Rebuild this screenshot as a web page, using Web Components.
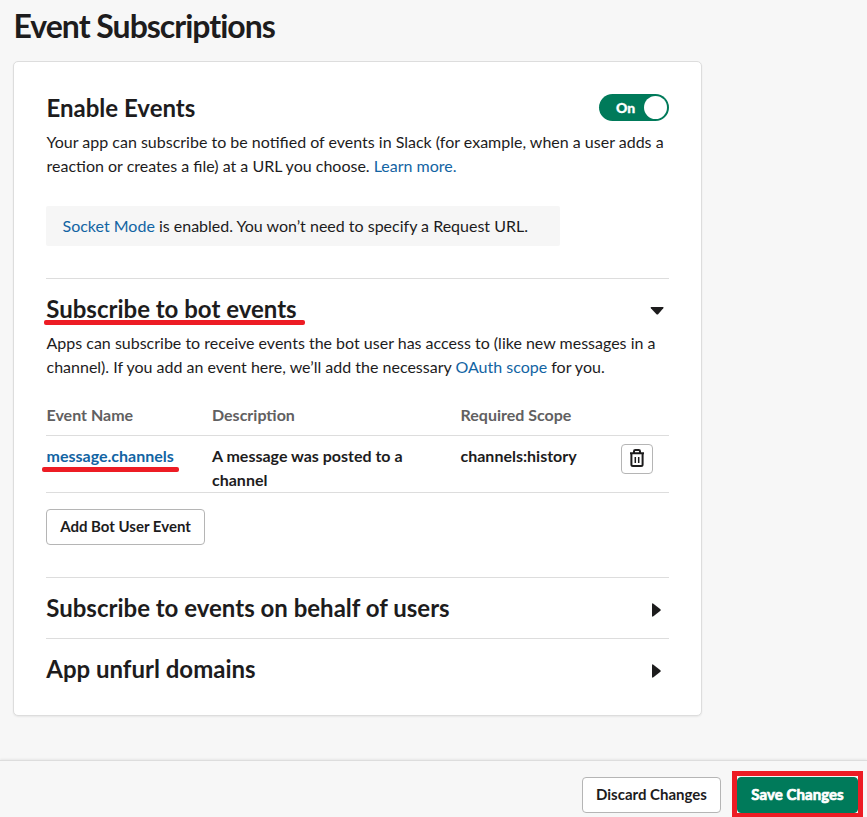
<!DOCTYPE html>
<html lang="en"><head><meta charset="utf-8"><title>Event Subscriptions</title>
<style>html,body{margin:0;height:100%;overflow:hidden;background:#f7f7f7}</style></head><body>
<event-page></event-page>
<script>
const define=(name,css,html)=>customElements.define(name,class extends HTMLElement{
  constructor(){super();this.attachShadow({mode:'open'}).innerHTML=`<style>*{box-sizing:border-box}${css}</style>${html}`;}
});
define('toggle-switch',`:host{display:flex;box-sizing:border-box;width:70px;height:27px;border-radius:14px;background:#007a5a;color:#fff;align-items:center;justify-content:space-between;padding:0 2px 0 17px;font:900 14px/25px Lato,sans-serif;-webkit-text-stroke:.3px #fff}i{width:23px;height:23px;border-radius:50%;background:#fff}`,`<slot></slot><i></i>`);
define('text-link',`:host{color:#1264a3}`,`<slot></slot>`);
define('note-box',`:host{display:block;box-sizing:border-box;width:514px;height:40px;background:#f6f6f6;border-radius:2px;padding:8px 16.5px;white-space:nowrap}`,`<slot></slot>`);
define('slack-button',`:host{display:flex;box-sizing:border-box;height:36px;border:1px solid #b5b5b5;border-radius:4px;background:#fff;align-items:center;justify-content:center;font:700 15px/24px Lato,sans-serif;padding-bottom:2px;white-space:nowrap}:host([icon]){width:32px;height:30px;padding:0 0 2px}:host([primary]){background:#007a5a;border-color:#007a5a;color:#fff;letter-spacing:.06px;-webkit-text-stroke:.7px #fff}`,`<slot></slot>`);
define('section-head',`:host{display:flex;align-items:center;justify-content:space-between;height:60px;padding-right:6px}:host([open]){padding-right:5px}h2{margin:0 0 0 .25px;font:700 24px/32px Lato,sans-serif;white-space:nowrap}svg{display:block;margin-top:4px}.down{display:none}:host([open]) .down{display:block}:host([open]) .right{display:none}`,`<h2><slot></slot></h2><svg class="right" width="12" height="16"><path d="M1 2.2Q1 .8 2.4 1.7L9.4 7.2Q10.2 8 9.4 8.8L2.4 14.3Q1 15.2 1 13.8Z" fill="#1d1c1d"/></svg><svg class="down" width="14" height="12"><path d="M1.3 2Q0 2 .9 3.3L6.5 9.2Q7.3 10 8.1 9.2L13.3 3.3Q14.2 2 12.9 2Z" fill="#1d1c1d"/></svg>`);
define('event-table',`:host{display:block}.row{display:grid;grid-template-columns:166px 248.5px 160.5px 1fr;border-bottom:1px solid #ddd;font-weight:700}.head{height:33px;color:#616061;line-height:24px}.body{height:57px;padding-top:8px}.row>:first-child{margin-left:.5px}text-link{justify-self:start}`,`<div class="row head"><span>Event Name</span><span>Description</span><span>Required Scope</span></div><div class="row body"><text-link>message.channels</text-link><span>A message was posted to a<br>channel</span><span>channels:history</span><slack-button icon><svg width="16" height="18" viewBox="0 0 16 18" fill="none" stroke="#1d1c1d" stroke-width="2" stroke-linejoin="round"><path d="M1 4.2H15M5 4V2.3Q5 1 6.3 1H9.7Q11 1 11 2.3V4M2.4 4V15.5Q2.4 17 3.9 17H12.1Q13.6 17 13.6 15.5V4"/><path stroke-width="1.5" d="M6.3 8V14M9.7 8V14"/></svg></slack-button></div>`);
define('event-page',`:host{display:flex;flex-direction:column;width:867px;height:817px;color:#1d1c1d;font:400 16px/24px Lato,sans-serif;position:relative}
h1{margin:0 0 0 13.5px;padding-top:5px;height:61px;font:700 32px/42px Lato,sans-serif;letter-spacing:-1px;white-space:nowrap;box-sizing:border-box}
.card{box-sizing:border-box;margin-left:13px;width:689px;height:655px;background:#fff;border:1px solid #ddd;border-radius:5px;box-shadow:0 1px 2px #0001;padding:30px 32px}
.top{display:flex;justify-content:space-between;align-items:flex-start;height:32px}toggle-switch{margin-top:2px}h2{font:700 24px/32px Lato,sans-serif;margin:0 0 0 .5px}
p{margin:0 0 0 .5px;white-space:nowrap}.intro{margin-top:6px;margin-bottom:28px}.line{height:1px;background:#ddd}.mark{position:absolute;background:#ed1c24;border-radius:2px;height:5px}
footer{margin-top:44px;border-top:1px solid #ddd;height:57px;box-sizing:border-box;display:flex;padding:16px 8px 0 582px;gap:16px;box-shadow:0 -1px 2px #0001}.box{position:absolute;box-sizing:border-box;left:732px;top:771px;width:131px;height:47px;border:5px solid #ed1c24}`,`
<h1>Event Subscriptions</h1><div class="card"><div class="top"><h2>Enable Events</h2><toggle-switch>On</toggle-switch></div>
<p class="intro">Your app can subscribe to be notified of events in Slack (for example, when a user adds a<br>reaction or creates a file) at a URL you choose. <text-link>Learn more.</text-link></p>
<note-box><text-link>Socket Mode</text-link> is enabled. You won’t need to specify a Request URL.</note-box>
<div class="line" style="margin-top:32px"></div><section-head open style="height:52px;padding-top:8px;box-sizing:border-box">Subscribe to bot events</section-head>
<p>Apps can subscribe to receive events the bot user has access to (like new messages in a<br>channel). If you add an event here, we’ll add the necessary <text-link>OAuth scope</text-link> for you.</p>
<event-table style="margin-top:24px"></event-table><slack-button style="width:159px;margin-top:16px">Add Bot User Event</slack-button>
<div class="line" style="margin-top:32px"></div><section-head>Subscribe to events on behalf of users</section-head><div class="line"></div><section-head>App unfurl domains</section-head></div>
<footer><slack-button style="width:139px">Discard Changes</slack-button><slack-button primary style="width:121px">Save Changes</slack-button></footer>
<span class="mark" style="left:44px;top:320px;width:261px"></span><span class="mark" style="left:42px;top:467px;width:137px"></span><span class="box"></span>`);
</script></body></html>
